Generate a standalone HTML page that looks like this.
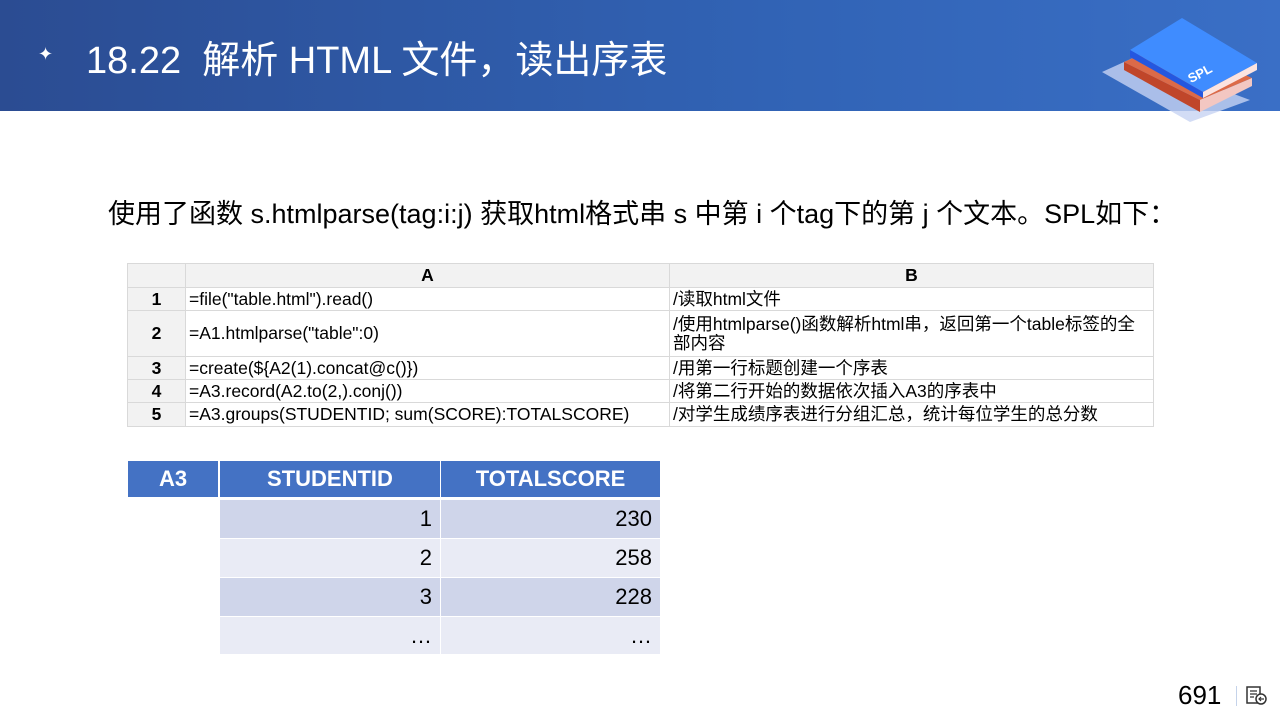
<!DOCTYPE html>
<html><head><meta charset="utf-8"><style>
*{margin:0;padding:0;box-sizing:border-box}
body{width:1280px;height:720px;overflow:hidden;background:#fff;position:relative;font-family:"Liberation Sans","Noto Sans CJK SC",sans-serif}
.hdr{position:absolute;left:0;top:0;width:1280px;height:111px;background:linear-gradient(90deg,#2b4c92 0%,#3163b5 60%,#3a6fc6 100%)}
.title{position:absolute;left:86px;top:29px;color:#fff;font-size:38px;white-space:nowrap}
.star{position:absolute;left:38px;top:44px;color:#fff;font-size:18px}
.sub{position:absolute;left:108px;top:192px;font-size:27px;color:#000;white-space:nowrap}
.g{position:absolute;border-collapse:collapse;left:127px;top:263px;font-size:17.5px}
.g td{border:1px solid #d9d9d9;padding:0 3px;line-height:19px;vertical-align:middle}
.g tr.h td{background:#f2f2f2;text-align:center;font-weight:bold}
.g td.n{background:#f2f2f2;text-align:center;font-weight:bold;width:58px}
.r{position:absolute;font-size:22px}
.c{position:absolute;display:flex;align-items:center;justify-content:flex-end;padding-right:8px}
.hc{background:#4472c4;color:#fff;font-weight:bold;justify-content:center;padding:0}
</style></head><body>
<div class="hdr"></div>
<div class="star">✦</div>
<div class="title">18.22&nbsp; 解析 HTML 文件，读出序表</div>
<svg style="position:absolute;left:1090px;top:0" width="190" height="125" viewBox="0 0 190 125">
<polygon points="12,72 45,57 160,100 100,122" fill="#c7d3f2" opacity="0.8"/>
<polygon points="34,62 80,42 162,78 110,100" fill="#dc6a48"/>
<polygon points="34,62 34,70 110,112 110,100" fill="#c0462a"/>
<polygon points="110,100 162,78 162,86 110,112" fill="#f3c7c2"/>
<polygon points="40,50 92,18 167,63 113,92" fill="#3f8cff"/>
<polygon points="40,50 40,57 113,98 113,92" fill="#2457e0"/>
<polygon points="113,92 167,63 167,70 113,98" fill="#fbe3e0"/>
<text x="98" y="78" fill="#fff" font-size="13" font-weight="bold" transform="rotate(-28 110 75)" font-family="Liberation Sans">SPL</text>
</svg>
<div class="sub">使用了函数 s.htmlparse(tag:i:j) 获取html格式串 s 中第 i 个tag下的第 j 个文本。SPL如下：</div>
<table class="g">
<tr class="h" style="height:24px"><td style="width:58px"></td><td style="width:484px">A</td><td style="width:484px">B</td></tr>
<tr style="height:23px"><td class="n">1</td><td>=file("table.html").read()</td><td>/读取html文件</td></tr>
<tr style="height:46px"><td class="n">2</td><td>=A1.htmlparse("table":0)</td><td>/使用htmlparse()函数解析html串，返回第一个table标签的全部内容</td></tr>
<tr style="height:23px"><td class="n">3</td><td>=create(${A2(1).concat@c()})</td><td>/用第一行标题创建一个序表</td></tr>
<tr style="height:23px"><td class="n">4</td><td>=A3.record(A2.to(2,).conj())</td><td>/将第二行开始的数据依次插入A3的序表中</td></tr>
<tr style="height:24px"><td class="n">5</td><td>=A3.groups(STUDENTID; sum(SCORE):TOTALSCORE)</td><td>/对学生成绩序表进行分组汇总，统计每位学生的总分数</td></tr>
</table>
<div class="r">
<div class="c hc" style="left:128px;top:461px;width:90px;height:36px">A3</div>
<div class="c hc" style="left:220px;top:461px;width:220px;height:36px">STUDENTID</div>
<div class="c hc" style="left:441px;top:461px;width:219px;height:36px">TOTALSCORE</div>
<div class="c" style="left:220px;top:500px;width:220px;height:38px;background:#cfd5ea">1</div>
<div class="c" style="left:441px;top:500px;width:219px;height:38px;background:#cfd5ea">230</div>
<div class="c" style="left:220px;top:539px;width:220px;height:38px;background:#e9ebf5">2</div>
<div class="c" style="left:441px;top:539px;width:219px;height:38px;background:#e9ebf5">258</div>
<div class="c" style="left:220px;top:578px;width:220px;height:38px;background:#cfd5ea">3</div>
<div class="c" style="left:441px;top:578px;width:219px;height:38px;background:#cfd5ea">228</div>
<div class="c" style="left:220px;top:617px;width:220px;height:37px;background:#e9ebf5">…</div>
<div class="c" style="left:441px;top:617px;width:219px;height:37px;background:#e9ebf5">…</div>
</div>
<div style="position:absolute;left:1178px;top:680px;font-size:26px">691</div>
<div style="position:absolute;left:1236px;top:686px;width:1px;height:20px;background:#c5d3ea"></div>
<svg style="position:absolute;left:1246px;top:686px" width="22" height="20" viewBox="0 0 22 20"><rect x="1" y="1" width="13" height="16" fill="none" stroke="#333" stroke-width="1.5"/><path d="M4 5h7M4 8h7M4 11h4" stroke="#333" stroke-width="1.2"/><circle cx="15" cy="13" r="5" fill="#fff" stroke="#333" stroke-width="1.5"/><path d="M18 13h-5M15 11l-2 2 2 2" stroke="#333" stroke-width="1.2" fill="none"/></svg>
</body></html>
